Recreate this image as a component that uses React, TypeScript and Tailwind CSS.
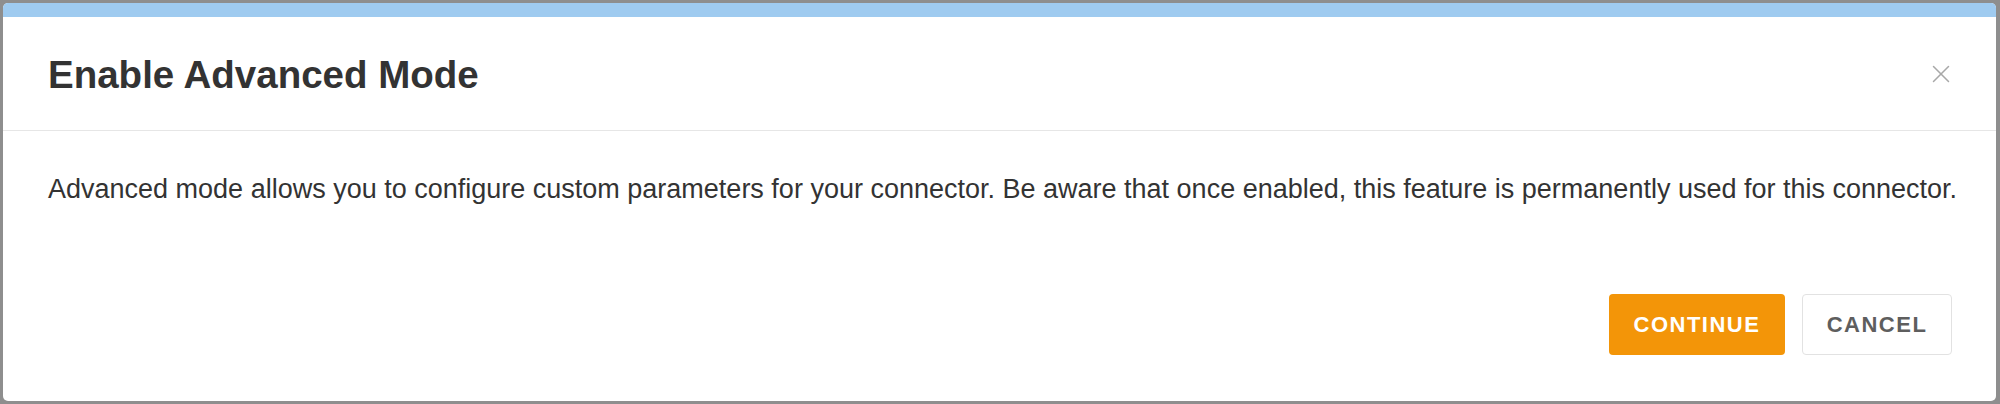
import { X } from 'lucide-react'

export default function App() {
  return (
    <div className="w-[2000px] h-[404px] bg-[#8e8e8e] pt-[3px] pb-[3px] pl-[3px] pr-[4px] font-['Liberation_Sans',Arial,sans-serif]">
      <div className="h-full rounded-[5px] bg-white overflow-hidden flex flex-col">
        {/* top strip */}
        <div className="h-[14px] bg-[#9fcbf0] shrink-0" />

        {/* Header */}
        <div className="h-[114px] shrink-0 flex items-center justify-between pl-[45px] pr-[40px] border-b border-[#e6e6e6]">
          <h1 className="text-[38.5px] font-bold text-[#333333] leading-none pt-[4px]">Enable Advanced Mode</h1>
          <button className="text-[#a8a8a8] pt-[1px]">
            <X size={30} strokeWidth={1.2} />
          </button>
        </div>

        {/* Body */}
        <div className="pl-[45px] pt-[41px]">
          <p className="text-[27px] leading-[34px] text-[#333333] whitespace-nowrap">
            Advanced mode allows you to configure custom parameters for your connector. Be aware that once enabled, this feature is permanently used for this connector.
          </p>
        </div>

        {/* Footer */}
        <div className="flex justify-end gap-[17px] px-[44px] pt-[88px]">
          <button className="w-[176px] h-[61px] rounded-[4px] bg-[#f39508] text-white text-[22px] font-bold tracking-[1.5px]">
            CONTINUE
          </button>
          <button className="w-[150px] h-[61px] rounded-[4px] bg-white border border-[#e2e2e2] text-[#5e5e5e] text-[22px] font-bold tracking-[1.5px]">
            CANCEL
          </button>
        </div>
      </div>
    </div>
  )
}
